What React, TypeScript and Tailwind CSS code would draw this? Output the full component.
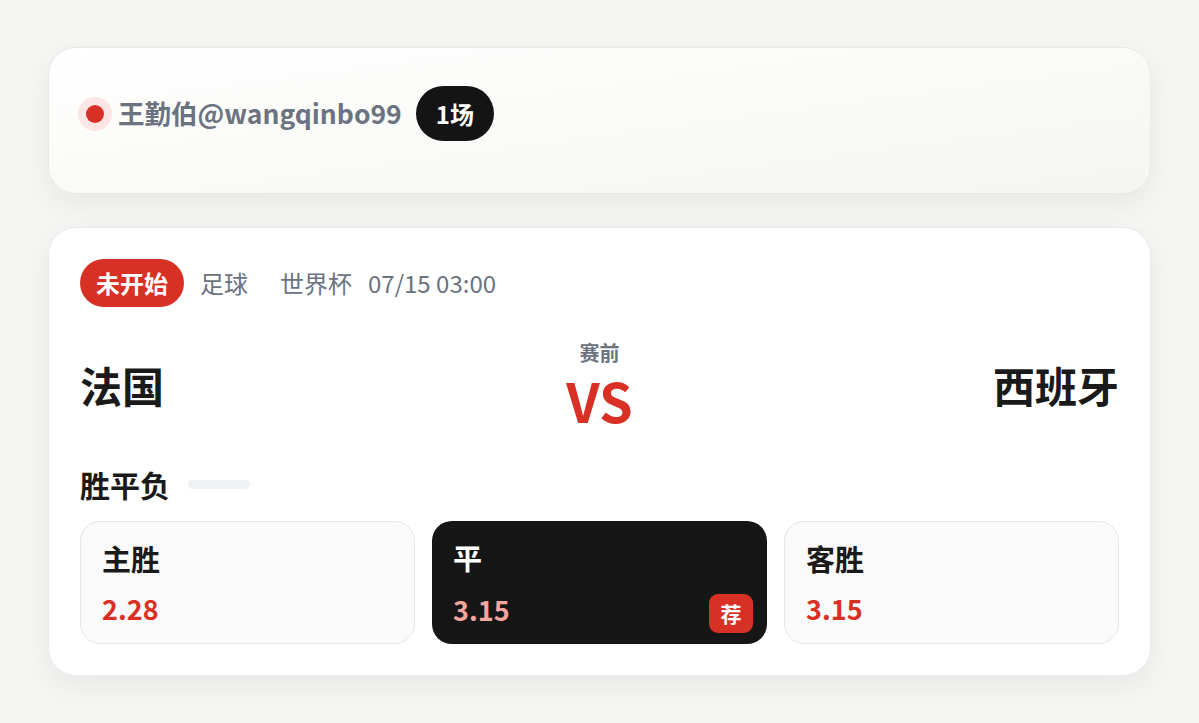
const FONT = "font-['Noto_Sans_CJK_SC','Noto_Sans',sans-serif]"

const OPTIONS = [
  { label: '主胜', odds: '2.28', picked: false },
  { label: '平', odds: '3.15', picked: true },
  { label: '客胜', odds: '3.15', picked: false },
]

export default function App() {
  return (
    <main className={`min-h-[723px] bg-[#f5f5f4] px-12 pt-[47px] pb-12 flex flex-col gap-[33px] ${FONT}`}>
      {/* ── Author card ─────────────────────────────────────────── */}
      <section className="h-[147px] rounded-[28px] border border-[#e9e9e5] bg-gradient-to-br from-white to-[#f5f5f1] shadow-[0_10px_30px_rgba(0,0,0,0.06)] px-[29px] flex items-center">
        <div className="flex items-center gap-[6px] -mt-[14px]">
          <span className="w-[34px] h-[34px] rounded-full bg-[#fbe6e5] flex items-center justify-center">
            <span className="w-[18px] h-[18px] rounded-full bg-[#d93025]" />
          </span>
          <span className="text-[26.5px] font-bold text-[#6b7280] leading-none">王勤伯@wangqinbo99</span>
          <span className="ml-[8px] h-[55px] px-[20px] rounded-full bg-[#141414] text-white text-[24px] font-bold flex items-center">
            1场
          </span>
        </div>
      </section>

      {/* ── Match card ──────────────────────────────────────────── */}
      <section className="rounded-[28px] border border-[#ebebeb] bg-white shadow-[0_10px_30px_rgba(0,0,0,0.06)] px-[31px] pt-[31px] pb-[31px]">
        {/* Meta */}
        <div className="flex items-center text-[24px] text-[#6b7280]">
          <span className="h-[48px] px-[16px] rounded-full bg-[#d93025] text-white text-[24px] font-bold flex items-center">
            未开始
          </span>
          <span className="ml-[16px]">足球</span>
          <span className="ml-[32px]">世界杯</span>
          <span className="ml-[16px]">07/15 03:00</span>
        </div>

        {/* Teams */}
        <div className="mt-[36px] grid grid-cols-[1fr_auto_1fr] items-center">
          <span className="text-[42px] font-bold text-[#1a1a1a] leading-none">法国</span>
          <div className="flex flex-col items-center">
            <span className="text-[20px] font-bold text-[#6b7280] leading-none">赛前</span>
            <span className="mt-[10px] text-[54px] font-bold text-[#d93025] leading-none">VS</span>
          </div>
          <span className="justify-self-end text-[42px] font-bold text-[#1a1a1a] leading-none">西班牙</span>
        </div>

        {/* Market */}
        <div className="mt-[42px] flex items-center gap-[18px]">
          <span className="text-[30px] font-bold text-[#1a1a1a] leading-none">胜平负</span>
          <span className="w-[62px] h-[9px] rounded-full bg-[#f0f1f3]" />
        </div>

        <div className="mt-[22px] grid grid-cols-3 gap-[17px]">
          {OPTIONS.map((o) =>
            o.picked ? (
              <div key={o.label} className="h-[123px] rounded-[20px] bg-[#161616] pl-[21px] pr-[14px] pt-[22px] flex flex-col">
                <span className="text-[29px] font-bold text-white leading-none">{o.label}</span>
                <div className="mt-[13px] flex items-center justify-between">
                  <span className="text-[27px] font-bold text-[#f3a5a0] leading-none">{o.odds}</span>
                  <span className="mt-[9px] w-[44px] h-[39px] rounded-[9px] bg-[#d93025] text-white text-[21px] font-bold flex items-center justify-center">
                    荐
                  </span>
                </div>
              </div>
            ) : (
              <div key={o.label} className="h-[123px] rounded-[20px] border border-[#e6e6e6] bg-[#fafafa] pl-[21px] pt-[22px] flex flex-col">
                <span className="text-[29px] font-bold text-[#1a1a1a] leading-none">{o.label}</span>
                <span className="mt-[22px] text-[27px] font-bold text-[#d93025] leading-none">{o.odds}</span>
              </div>
            )
          )}
        </div>
      </section>
    </main>
  )
}
